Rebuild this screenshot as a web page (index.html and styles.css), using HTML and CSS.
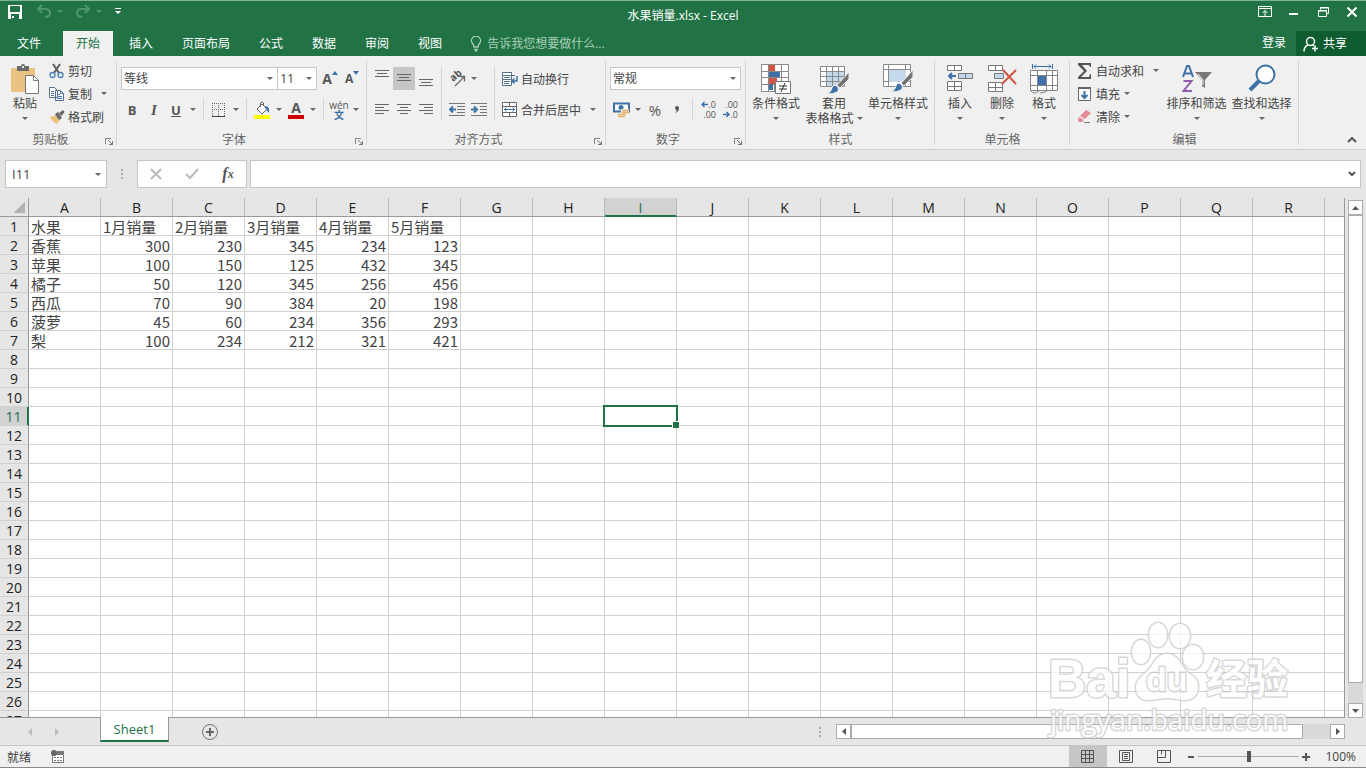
FILE: index.html
```html
<!DOCTYPE html>
<html lang="zh-CN">

<head>
  <meta charset="UTF-8">
  <meta name="viewport" content="width=device-width, initial-scale=1">
  <title>水果销量.xlsx - Excel</title>
  <link rel="stylesheet" href="styles.css">
</head>

<body>
<header class="top">
  <div class="titlebar">
    <div class="quick">
      <button type="button" class="quick-btn" aria-label="保存">
        <svg width="16" height="16" viewBox="0 0 16 16" shape-rendering="crispEdges"><path d="M1 1h14v14H1z" fill="#fff"/><path d="M3 2h10v6H3zM4 10h8v5H4z" fill="#217346"/><path d="M5 12h2v2H5z" fill="#fff"/></svg>
      </button>
      <button type="button" class="quick-btn undo" aria-label="撤消">
        <svg width="16" height="16" viewBox="0 0 16 16"><path d="M6 1L2 5l4 4M2 5h7q5 0 5 4t-5 4" fill="none" stroke="#4f9570" stroke-width="2"/></svg>
      </button>
      <i class="caret dim"></i>
      <button type="button" class="quick-btn redo" aria-label="恢复">
        <svg width="16" height="16" viewBox="0 0 16 16"><path d="M10 1l4 4-4 4M14 5H7q-5 0-5 4t5 4" fill="none" stroke="#4f9570" stroke-width="2"/></svg>
      </button>
      <i class="caret dim"></i>
      <button type="button" class="quick-btn custom" aria-label="自定义快速访问工具栏">
        <svg width="8" height="8" viewBox="0 0 8 8"><path d="M1 0h6v1H1zM1 3h6L4 6z" fill="#fff"/></svg>
      </button>
    </div>
    <h1>水果销量.xlsx - Excel</h1>
    <div class="window-btns">
      <button type="button" aria-label="功能区显示选项"><svg width="14" height="12" viewBox="0 0 14 12"><path d="M.5.5h13v10H.5zM1 2.500h12M7 10V4.500M4.500 7L7 4.500 9.500 7" fill="none" stroke="#fff"/></svg></button>
      <button type="button" aria-label="最小化"><svg width="14" height="12" viewBox="0 0 14 12"><path d="M2 7h9v2H2z" fill="#fff"/></svg></button>
      <button type="button" aria-label="向下还原"><svg width="14" height="12" viewBox="0 0 14 12"><path d="M4.500 3.500v-2h8v6h-2M2.500 4.500h8v6h-8zM4 2h9M2 5h9" fill="none" stroke="#fff"/></svg></button>
      <button type="button" aria-label="关闭"><svg width="14" height="12" viewBox="0 0 14 12"><path d="M2.500 1.500l9 9M11.500 1.500l-9 9" fill="none" stroke="#fff" stroke-width="2"/></svg></button>
    </div>
  </div>
  <nav class="tabs">
    <button type="button" class="file">文件</button>
    <button type="button" class="active">开始</button>
    <button type="button">插入</button>
    <button type="button">页面布局</button>
    <button type="button">公式</button>
    <button type="button">数据</button>
    <button type="button">审阅</button>
    <button type="button">视图</button>
    <label class="tell-me">
      <svg width="12" height="16" viewBox="0 0 12 16"><path d="M4 11q0-2-1.500-3.500a4.500 4.500 0 1 1 7 0Q8 9 8 11zM4 13.500h4M5 15.200h2" fill="none" stroke="#a9d0b9" stroke-width="1.300"/></svg>
      <input type="text" placeholder="告诉我您想要做什么..." aria-label="告诉我您想要做什么">
    </label>
    <a href="#" class="login">登录</a>
    <button type="button" class="share">
      <svg width="16" height="16" viewBox="0 0 16 16"><circle cx="7.500" cy="5.500" r="4" fill="none" stroke="#fff" stroke-width="1.500"/><path d="M1 15.500q0-5 4-6.500M9.500 9l1.500 1M12 9.500v6M9 12.500h6" fill="none" stroke="#fff" stroke-width="1.500"/></svg>
      共享
    </button>
  </nav>
</header>

<div class="ribbon">
  <!-- 剪贴板 -->
  <section class="group clipboard">
    <div class="group-body">
      <button type="button" class="big w42">
        <svg width="30" height="30" viewBox="0 0 30 30"><path d="M1 4h24v24H1z" fill="#eac282"/><path d="M7 2h4q0-2 2-2t2 2h4v5H7z" fill="#6b6b6b"/><path d="M12 2h2v2h-2z" fill="#eee"/><path d="M15.500 11.500h8l5 5v13h-13z" fill="#fff" stroke="#777"/><path d="M23.500 11.500v5h5" fill="none" stroke="#777"/></svg>
        <span>粘贴</span>
        <i class="caret"></i>
      </button>
      <div class="stack">
        <button type="button" class="small">
          <svg width="16" height="16" viewBox="0 0 16 16"><path d="M4 1l6 9M11 1L5 10" stroke="#5c5c5c" stroke-width="2"/><circle cx="3.500" cy="12" r="2.500" fill="none" stroke="#4a7ebb" stroke-width="1.300"/><circle cx="11.500" cy="12" r="2.500" fill="none" stroke="#4a7ebb" stroke-width="1.300"/></svg>
          剪切
        </button>
        <button type="button" class="small">
          <svg width="16" height="16" viewBox="0 0 16 16"><path d="M.5 1.500h5l3 3v7h-8zM6.500 4.500h5l3 3v7h-8z" fill="#fff" stroke="#56708c"/><path d="M2 5.500h3M2 7.500h3M2 9.500h3M8 8.500h3M8 10.500h5M8 12.500h5M11.500 4.500v3h3" stroke="#4a7ebb" fill="none"/></svg>
          复制<i class="caret far"></i>
        </button>
        <button type="button" class="small">
          <svg width="16" height="16" viewBox="0 0 16 16"><path d="M1 8l6-2 4 5-3 4q-5-2-7-7z" fill="#eac282"/><path d="M6 5l3-2 4 6-3 2z" fill="#666"/><path d="M10 4l4-3 1.500 2-3 4z" fill="#666"/></svg>
          格式刷
        </button>
      </div>
    </div>
    <footer><span>剪贴板</span><button type="button" class="launcher" aria-label="剪贴板设置"></button></footer>
  </section>

  <!-- 字体 -->
  <section class="group font">
    <div class="group-body rows">
      <div class="row">
        <span class="combo font-name"><select aria-label="字体"><option>等线</option></select></span>
        <span class="combo font-size"><select aria-label="字号"><option>11</option></select></span>
        <button type="button" class="tool grow" aria-label="增大字号"><b>A</b><svg width="6" height="4" viewBox="0 0 6 4"><path d="M0 4l3-4 3 4z" fill="#3d72a8"/></svg></button>
        <button type="button" class="tool grow shrink" aria-label="减小字号"><b>A</b><svg width="6" height="4" viewBox="0 0 6 4"><path d="M0 0l3 4 3-4z" fill="#3d72a8"/></svg></button>
      </div>
      <div class="row">
        <button type="button" class="tool"><b>B</b></button>
        <button type="button" class="tool italic"><b>I</b></button>
        <button type="button" class="tool underline"><b>U</b></button>
        <button type="button" class="drop" aria-label="下划线选项"><i class="caret"></i></button>
        <i class="sep"></i>
        <button type="button" class="tool" aria-label="边框"><svg width="14" height="14" viewBox="0 0 14 14"><path d="M.5 0v13M6.500 0v13M12.500 0v13M0 .5h13M0 6.500h13" stroke="#666" stroke-dasharray="1 1"/><path d="M0 13.500h13" stroke="#444"/></svg></button>
        <button type="button" class="drop" aria-label="边框选项"><i class="caret"></i></button>
        <i class="sep"></i>
        <button type="button" class="tool" aria-label="填充颜色"><svg width="16" height="18" viewBox="0 0 16 18"><path d="M3 8l5-5 5 5-5 5z" fill="#fff" stroke="#666"/><path d="M6.500 6V2q1.500-2 3 0v3" fill="none" stroke="#666"/><path d="M11 5q5 0 4 7-2-3-3-3z" fill="#3d72a8"/><path d="M0 14h16v4H0z" fill="#ff0"/></svg></button>
        <button type="button" class="drop" aria-label="填充颜色选项"><i class="caret"></i></button>
        <button type="button" class="tool font-color" aria-label="字体颜色"><b>A</b></button>
        <button type="button" class="drop" aria-label="字体颜色选项"><i class="caret"></i></button>
        <i class="sep"></i>
        <button type="button" class="tool pinyin"><span>wén</span><span>文</span></button>
        <button type="button" class="drop" aria-label="拼音选项"><i class="caret"></i></button>
      </div>
    </div>
    <footer><span>字体</span><button type="button" class="launcher" aria-label="字体设置"></button></footer>
  </section>

  <!-- 对齐方式 -->
  <section class="group align">
    <div class="group-body">
      <div class="rows">
        <div class="row">
          <button type="button" class="tool" aria-label="顶端对齐"><svg width="14" height="23" viewBox="0 0 14 23"><path d="M0 3.500h14M2 6.500h10M0 9.500h14" stroke="#666"/></svg></button>
          <button type="button" class="tool on" aria-label="垂直居中"><svg width="14" height="23" viewBox="0 0 14 23"><path d="M0 7.500h14M2 10.500h10M0 13.500h14" stroke="#666"/></svg></button>
          <button type="button" class="tool" aria-label="底端对齐"><svg width="14" height="23" viewBox="0 0 14 23"><path d="M0 12.500h14M2 15.500h10M0 18.500h14" stroke="#666"/></svg></button>
        </div>
        <div class="row">
          <button type="button" class="tool" aria-label="左对齐"><svg width="14" height="15" viewBox="0 0 14 15"><path d="M0 2.500h14M0 5.500h9M0 8.500h14M0 11.500h9" stroke="#666"/></svg></button>
          <button type="button" class="tool" aria-label="居中"><svg width="14" height="15" viewBox="0 0 14 15"><path d="M0 2.500h14M3 5.500h8M0 8.500h14M3 11.500h8" stroke="#666"/></svg></button>
          <button type="button" class="tool" aria-label="右对齐"><svg width="14" height="15" viewBox="0 0 14 15"><path d="M0 2.500h14M5 5.500h9M0 8.500h14M5 11.500h9" stroke="#666"/></svg></button>
        </div>
      </div>
      <i class="sep tall"></i>
      <div class="rows">
        <div class="row">
          <button type="button" class="tool" aria-label="方向"><svg width="20" height="19" viewBox="0 0 20 19"><text font-size="10" font-weight="bold" fill="#555" transform="translate(6 13) rotate(-40)">ab</text><path d="M8 17l9-9M12.500 7.500h5v5" fill="none" stroke="#666" stroke-width="1.300"/></svg></button>
          <button type="button" class="drop" aria-label="方向选项"><i class="caret"></i></button>
        </div>
        <div class="row">
          <button type="button" class="tool" aria-label="减少缩进量"><svg width="16" height="15" viewBox="0 0 16 15"><path d="M0 1.500h16M8 4.500h8M8 7.500h8M8 10.500h8M0 13.500h16" stroke="#777"/><path d="M7 7.500H1M4 4.500l-3 3 3 3" fill="none" stroke="#3d72a8" stroke-width="2"/></svg></button>
          <button type="button" class="tool" aria-label="增加缩进量"><svg width="16" height="15" viewBox="0 0 16 15"><path d="M0 1.500h16M9 4.500h7M9 7.500h7M9 10.500h7M0 13.500h16" stroke="#777"/><path d="M0 7.500h6M3 4.500l3 3-3 3" fill="none" stroke="#3d72a8" stroke-width="2"/></svg></button>
        </div>
      </div>
      <i class="sep tall"></i>
      <div class="rows">
        <div class="row">
          <button type="button" class="small">
            <svg width="16" height="16" viewBox="0 0 16 16"><path d="M.5 1.500h9v3h-9zM.5 4.500h9v4h-9zM.5 8.500h9v6h-9z" fill="#fff" stroke="#56708c"/><path d="M2 6.500h6M2 10.500h6M2 12.500h5M0 1.500h10M10 4.500h3" stroke="#56708c"/><path d="M15 5v5h-5M12.500 7.500L10 10l2.500 2.500" fill="none" stroke="#3d72a8" stroke-width="1.500"/></svg>
            自动换行
          </button>
        </div>
        <div class="row">
          <button type="button" class="small">
            <svg width="16" height="16" viewBox="0 0 16 16"><path d="M.5.5h14v14H.5zM.5 4.500h14M.5 10.500h14M7.500.5v4M7.500 10.500v4" fill="#fff" stroke="#666"/><path d="M2 7.500h11M4.500 5.500l-2 2 2 2M10.500 5.500l2 2-2 2" fill="none" stroke="#3d72a8"/></svg>
            合并后居中<i class="caret far"></i>
          </button>
        </div>
      </div>
    </div>
    <footer><span>对齐方式</span><button type="button" class="launcher" aria-label="对齐设置"></button></footer>
  </section>

  <!-- 数字 -->
  <section class="group number">
    <div class="group-body rows">
      <div class="row">
        <span class="combo format"><select aria-label="数字格式"><option>常规</option></select></span>
      </div>
      <div class="row">
        <button type="button" class="tool" aria-label="会计数字格式"><svg width="17" height="16" viewBox="0 0 17 16"><path d="M1 1.500h15v8H1z" fill="#fff" stroke="#3d72a8" stroke-width="2"/><circle cx="8" cy="5.500" r="2.500" fill="#3d72a8"/><path d="M8 7h8v8H5v-3h3z" fill="#f0f0f0"/><path d="M9 8.500h7M9 10.500h7M5 12.500h8M5 14.500h7" stroke="#e6b066" stroke-width="1.500"/></svg></button>
        <button type="button" class="drop" aria-label="会计格式选项"><i class="caret"></i></button>
        <button type="button" class="tool percent">%</button>
        <button type="button" class="tool comma" aria-label="千位分隔样式"><svg width="8" height="10" viewBox="0 0 8 10"><path d="M2 8q2-1.500 1.500-3A2 2 0 1 1 6 3Q6 6.500 2 8z" fill="#555"/></svg></button>
        <i class="sep"></i>
        <button type="button" class="tool decimals"><span><svg width="7" height="7" viewBox="0 0 7 7"><path d="M7 3.500H1M3.500 1L1 3.500 3.500 6" fill="none" stroke="#3d72a8" stroke-width="1.500"/></svg>.0</span><span>.00</span></button>
        <button type="button" class="tool decimals"><span>.00</span><span><svg width="7" height="7" viewBox="0 0 7 7"><path d="M0 3.500h6M3.500 1L6 3.500 3.500 6" fill="none" stroke="#3d72a8" stroke-width="1.500"/></svg>.0</span></button>
      </div>
    </div>
    <footer><span>数字</span><button type="button" class="launcher" aria-label="数字设置"></button></footer>
  </section>

  <!-- 样式 -->
  <section class="group styles">
    <div class="group-body">
      <button type="button" class="big w52">
        <svg width="30" height="30" viewBox="0 0 30 30"><path d="M.5.500h27v27H.5z" fill="#fff"/><path d="M.5.500h27v27H.5zM.5 7.500h27M.5 13.500h27M.5 20.500h27M7.500.500v27M13.500.500v27M20.500.500v27" fill="none" stroke="#8a8a8a"/><path d="M8 1h6v6H8zM8 14h8v6H8z" fill="#d35644"/><path d="M8 8h11v5H8zM8 20h4v6H8z" fill="#3d72a8"/><path d="M14.500 17.500h15v12h-15z" fill="#fff" stroke="#777"/><path d="M18 22h8M18 25h8M24 19l-4 9" stroke="#333"/></svg>
        <span>条件格式</span>
        <i class="caret"></i>
      </button>
      <button type="button" class="big w64">
        <svg width="30" height="30" viewBox="0 0 30 30"><path d="M1.500 2.500h24v20h-24z" fill="#fff"/><path d="M8 8h17v14H8z" fill="#c5d9ec"/><path d="M1.500 2.500h24v20h-24zM1.500 7.500h24M1.500 12.500h24M1.500 17.500h24M7.500 2.500v20M13.500 2.500v20M19.500 2.500v20" fill="none" stroke="#8a8a8a"/><path d="M30 8v7l-9 9-3-3z" fill="#747474" stroke="#f0f0f0"/><path d="M7 30q5-1 6-6t6-1q3 7-12 7z" fill="#3d72a8" stroke="#f0f0f0"/></svg>
        <span>套用</span>
        <span class="with-caret">表格格式<i class="caret"></i></span>
      </button>
      <button type="button" class="big w64">
        <svg width="30" height="30" viewBox="0 0 30 30"><path d="M.5.500h27v22H.5z" fill="#fff"/><path d="M.5.500h27v22H.5zM.5 5.500h27M.5 17.500h27M5.500.500v22M22.500.500v22" fill="none" stroke="#8a8a8a"/><path d="M6 6h17v12H6z" fill="#c5d9ec"/><path d="M30 6v7l-9 9-3-3z" fill="#747474" stroke="#f0f0f0"/><path d="M7 28q5-1 6-6t6-1q3 7-12 7z" fill="#3d72a8" stroke="#f0f0f0"/></svg>
        <span>单元格样式</span>
        <i class="caret"></i>
      </button>
    </div>
    <footer><span>样式</span></footer>
  </section>

  <!-- 单元格 -->
  <section class="group cells">
    <div class="group-body">
      <button type="button" class="big w42">
        <svg width="28" height="30" viewBox="0 0 28 30"><path d="M1.500 1.500h14v5h-14zM8.500 1.500v5M1.500 17.500h14v9h-14zM8.500 17.500v9M1.500 22.500h14" fill="#fff" stroke="#777"/><path d="M12.500 9.500h14v5h-14zM19.500 9.500v5" fill="#c5d9ec" stroke="#777"/><path d="M10 12H3M6 9l-3 3 3 3" fill="none" stroke="#3d72a8" stroke-width="2"/></svg>
        <span>插入</span>
        <i class="caret"></i>
      </button>
      <button type="button" class="big w42">
        <svg width="30" height="30" viewBox="0 0 30 30"><path d="M1.500 1.500h14v5h-14zM8.500 1.500v5M1.500 18.500h14v9h-14zM8.500 18.500v9M1.500 23.500h14" fill="#fff" stroke="#777"/><path d="M7.500 9.500h9v5h-9z" fill="#c5d9ec" stroke="#777"/><path d="M16 6l13 14M29 6L15 20" stroke="#d35644" stroke-width="2"/></svg>
        <span>删除</span>
        <i class="caret"></i>
      </button>
      <button type="button" class="big w42">
        <svg width="28" height="30" viewBox="0 0 28 30"><path d="M.5 6.500h27v20H.5z" fill="#fff"/><path d="M.5 6.500h27v20H.5zM.5 11.500h27M.5 21.500h27M7.500 6.500v20M16.500 6.500v20M22.500 6.500v20M1 27q3 4 8 0M10 29q5 0 8-3" fill="none" stroke="#858585"/><path d="M8 12h8v9H8z" fill="#3d72a8"/><path d="M2.500 0v5M22.500 0v5M4 2.500h17M6 .5l-2 2 2 2M19 .5l2 2-2 2" fill="none" stroke="#3d72a8"/></svg>
        <span>格式</span>
        <i class="caret"></i>
      </button>
    </div>
    <footer><span>单元格</span></footer>
  </section>

  <!-- 编辑 -->
  <section class="group edit">
    <div class="group-body">
      <div class="stack">
        <button type="button" class="small">
          <svg width="16" height="16" viewBox="0 0 16 16"><path d="M1 0h13v4h-1L12 2H5l5 6-6 6h8l1-3h1v5H1v-2l6-6-6-6z" fill="#555"/></svg>
          自动求和<i class="caret far"></i>
        </button>
        <button type="button" class="small">
          <svg width="16" height="16" viewBox="0 0 16 16"><path d="M1.500 1.500h12v13h-12z" fill="#fff" stroke="#666"/><path d="M1 1h13v2H1z" fill="#666"/><path d="M7.500 5v7M4.500 9l3 3 3-3" fill="none" stroke="#3d72a8" stroke-width="2"/></svg>
          填充<i class="caret near"></i>
        </button>
        <button type="button" class="small">
          <svg width="16" height="16" viewBox="0 0 16 16"><path d="M9 1l5 3-6 6-5-3z" fill="#e58a93"/><path d="M2 8l5 3-2 2H2l-1-2z" fill="#e58a93"/><path d="M7 13.500h6" stroke="#777"/></svg>
          清除<i class="caret near"></i>
        </button>
      </div>
      <button type="button" class="big w65">
        <svg width="30" height="30" viewBox="0 0 30 30"><path d="M1 13L5 2h2l4 11M2.500 9.500h7" fill="none" stroke="#3d72a8" stroke-width="2"/><path d="M1.500 17h8l-8 10H10" fill="none" stroke="#8d5fae" stroke-width="2"/><path d="M13 8h17l-7 8v8l-3-2v-6z" fill="#777"/><path d="M16 10l5 6v5" fill="none" stroke="#fff"/></svg>
        <span>排序和筛选</span>
        <i class="caret"></i>
      </button>
      <button type="button" class="big w65">
        <svg width="30" height="30" viewBox="0 0 30 30"><circle cx="18.500" cy="10.500" r="9" fill="#fff" stroke="#3d72a8" stroke-width="2"/><path d="M12 17l-9 9" stroke="#3d72a8" stroke-width="4"/></svg>
        <span>查找和选择</span>
        <i class="caret"></i>
      </button>
    </div>
    <footer><span>编辑</span></footer>
  </section>

  <button type="button" class="collapse" aria-label="折叠功能区"><svg width="10" height="6" viewBox="0 0 10 6"><path d="M1 5l4-4 4 4" fill="none" stroke="#555" stroke-width="2"/></svg></button>
</div>

<div class="formula-bar">
  <label class="name-box">
    <input type="text" value="I11" aria-label="名称框">
    <i class="caret"></i>
  </label>
  <i class="dots"></i>
  <div class="formula-btns">
    <button type="button" aria-label="取消"><svg width="12" height="12" viewBox="0 0 12 12"><path d="M1 1l10 10M11 1L1 11" stroke="#bbb" stroke-width="2"/></svg></button>
    <button type="button" aria-label="输入"><svg width="14" height="12" viewBox="0 0 14 12"><path d="M1 6l4 4 8-9" fill="none" stroke="#bbb" stroke-width="2"/></svg></button>
    <button type="button" class="fx"><i>f</i><sub>x</sub></button>
  </div>
  <label class="formula">
    <input type="text" aria-label="编辑栏">
    <svg width="8" height="6" viewBox="0 0 8 6"><path d="M1 1l3 3 3-3" fill="none" stroke="#555" stroke-width="2"/></svg>
  </label>
</div>

<main class="sheet-area">
  <div class="sheet">
    <table id="grid"></table>
  </div>
  <div class="vscroll">
    <button type="button" aria-label="向上滚动"><svg width="7" height="4" viewBox="0 0 7 4"><path d="M0 4l3.500-4L7 4z" fill="#555"/></svg></button>
    <div class="vtrack"><div class="vthumb"></div></div>
    <button type="button" aria-label="向下滚动"><svg width="7" height="4" viewBox="0 0 7 4"><path d="M0 0l3.500 4L7 0z" fill="#555"/></svg></button>
  </div>
</main>

<div class="sheet-tabs">
  <div class="sheet-nav">
    <button type="button" aria-label="上一张"><svg width="5" height="8" viewBox="0 0 5 8"><path d="M5 0v8L1 4z" fill="#bbb"/></svg></button>
    <button type="button" aria-label="下一张"><svg width="5" height="8" viewBox="0 0 5 8"><path d="M0 0v8l4-4z" fill="#bbb"/></svg></button>
  </div>
  <button type="button" class="sheet-tab">Sheet1</button>
  <button type="button" class="add-sheet" aria-label="新工作表"><svg width="18" height="18" viewBox="0 0 18 18"><circle cx="9" cy="9" r="7.500" fill="none" stroke="#777"/><path d="M9 5v8M5 9h8" stroke="#666" stroke-width="2"/></svg></button>
  <div class="hscroll">
    <i class="dots"></i>
    <button type="button" aria-label="向左滚动"><svg width="4" height="7" viewBox="0 0 4 7"><path d="M4 0v7L0 3.500z" fill="#555"/></svg></button>
    <div class="htrack"><div class="hthumb"></div></div>
    <button type="button" aria-label="向右滚动"><svg width="4" height="7" viewBox="0 0 4 7"><path d="M0 0v7l4-3.500z" fill="#555"/></svg></button>
  </div>
</div>

<footer class="status">
  <span>就绪</span>
  <button type="button" class="macro" aria-label="录制宏"><svg width="14" height="14" viewBox="0 0 14 14"><path d="M1.500 4.500h11v8h-11z" fill="#fff" stroke="#777"/><path d="M6 1h7v3H6z" fill="#777"/><circle cx="3" cy="3" r="3" fill="#666"/><path d="M3 7.500h2M6 7.500h2M9 7.500h2M3 10.500h2M6 10.500h2M9 10.500h2" stroke="#777"/></svg></button>
  <div class="views">
    <button type="button" class="on" aria-label="普通"><svg width="14" height="14" viewBox="0 0 14 14"><path d="M.5.500h12v12H.5zM.5 4.500h12M.5 8.500h12M4.500.500v12M8.500.500v12" fill="none" stroke="#555"/></svg></button>
    <button type="button" aria-label="页面布局视图"><svg width="14" height="14" viewBox="0 0 14 14"><path d="M.5.500h13v12H.5zM3.500 2.500h7v8h-7zM5 4.500h4M5 6.500h4M5 8.500h4" fill="none" stroke="#555"/></svg></button>
    <button type="button" aria-label="分页预览"><svg width="14" height="14" viewBox="0 0 14 14"><path d="M.5.500h13v12H.5zM.5 7.500h8v-7M4.500.500v4" fill="none" stroke="#555"/></svg></button>
  </div>
  <div class="zoom">
    <button type="button" aria-label="缩小"><svg width="8" height="8" viewBox="0 0 8 8"><path d="M1 3h6v2H1z" fill="#555"/></svg></button>
    <input type="range" min="0" max="100" value="50" aria-label="缩放">
    <button type="button" aria-label="放大"><svg width="8" height="8" viewBox="0 0 8 8"><path d="M3 0h2v3h3v2H5v3H3V5H0V3h3z" fill="#555"/></svg></button>
    <button type="button" class="zoom-value">100%</button>
  </div>
</footer>

<svg class="watermark" width="250" height="124" viewBox="0 0 250 124">
  <g class="wm-shape">
    <ellipse cx="94" cy="34" rx="9" ry="12"/>
    <ellipse cx="111" cy="17" rx="9" ry="12"/>
    <ellipse cx="133" cy="18" rx="10" ry="12"/>
    <ellipse cx="146" cy="39" rx="10" ry="12"/>
    <path d="M120 36C128 36 132 42 136 49C141 57 151 58 151 68C151 77 146 82 138 82C132 82 127 80 120 80C113 80 108 82 101 82C93 82 89 77 89 69C89 60 98 57 104 49C108 42 112 36 120 36z"/>
  </g>
  <text class="wm-latin" x="1" y="79" font-size="53">Bai</text>
  <text class="wm-latin" x="99" y="73" font-size="34">du</text>
  <text class="wm-cjk" x="159" y="76" font-size="41">经验</text>
  <text class="wm-url" x="3" y="112" font-size="28">jingyan.baidu.com</text>
</svg>

<script src="script.js"></script>
</body>

</html>
```
FILE: styles.css
```css
* {
    box-sizing: border-box;
}

body {
    margin: 0;
    height: 100vh;
    display: flex;
    flex-direction: column;
    overflow: hidden;
    position: relative;
    background: #e6e6e6;
    color: #444;
    font-family: "Open Sans", "Noto Sans CJK SC", sans-serif;
    font-size: 12px;
}

button,
input,
select {
    margin: 0;
    padding: 0;
    border: 0;
    background: none;
    color: inherit;
    font: inherit;
    outline: none;
}

svg {
    display: block;
    flex: none;
}

.caret {
    flex: none;
    border: 3px solid transparent;
    border-top-color: #666;
    border-bottom: 0;
}

.caret.dim {
    border-top-color: #4f9570;
}

/* 标题栏 */
.top {
    background: #217346;
    border-top: 1px solid #7db596;
    color: #fff;
}

.titlebar {
    display: grid;
    grid-template-columns: 1fr auto 1fr;
    height: 30px;
}

.titlebar h1 {
    margin: 0;
    font-size: 12px;
    font-weight: normal;
    line-height: 29px;
}

.quick {
    display: flex;
    align-items: center;
    height: 21px;
    padding-left: 7px;
}

.undo {
    margin-left: 13px;
    margin-right: 5px;
}

.redo {
    margin-left: 12px;
    margin-right: 5px;
}

.custom {
    margin-left: 12px;
}

.window-btns {
    display: flex;
    justify-content: flex-end;
    height: 22px;
}

.window-btns button {
    width: 29px;
    display: flex;
    align-items: center;
    justify-content: center;
}

/* 选项卡 */
.tabs {
    display: flex;
    gap: 3px;
    height: 25px;
}

.tabs button {
    padding: 0 13px;
    line-height: 23px;
}

.tabs .file {
    padding: 0 19px 0 17px;
}

.tabs .active {
    background: #f0f0f0;
    color: #217346;
}

.tell-me {
    display: flex;
    align-items: center;
    gap: 5px;
    flex: 1;
    margin-left: 12px;
}

.tell-me input {
    flex: 1;
}

.tell-me input::placeholder {
    color: #a9d0b9;
    opacity: 1;
}

.login {
    color: #fff;
    text-decoration: none;
    line-height: 23px;
    margin-right: 7px;
}

.tabs .share {
    display: flex;
    align-items: center;
    gap: 4px;
    padding: 0 19px 0 7px;
    background: #0e5c2f;
}

/* 功能区 */
.ribbon {
    display: flex;
    height: 94px;
    padding-top: 3px;
    background: #f0f0f0;
    border-bottom: 1px solid #d0d0d0;
}

.group {
    display: flex;
    flex-direction: column;
    flex: none;
    background: linear-gradient(#d4d4d4, #d4d4d4) right 2px / 1px 84px no-repeat;
}

.clipboard {
    width: 117px;
}

.font {
    width: 250px;
}

.align {
    width: 239px;
}

.number {
    width: 140px;
}

.styles {
    width: 189px;
}

.cells {
    width: 135px;
}

.edit {
    width: 229px;
}

.group-body {
    display: flex;
    height: 73px;
    padding: 0 4px;
}

.rows {
    display: flex;
    flex-direction: column;
    gap: 8px;
    padding-top: 8px;
}

.row {
    display: flex;
    height: 23px;
}

.stack {
    display: flex;
    flex-direction: column;
}

.edit .stack {
    width: 90px;
}

.group footer {
    display: flex;
    height: 16px;
    line-height: 16px;
    color: #666;
}

.group footer span {
    flex: 1;
    text-align: center;
}

.launcher {
    width: 16px;
    background:
        linear-gradient(#888, #888) 4px 6px / 6px 1px no-repeat,
        linear-gradient(#888, #888) 4px 6px / 1px 6px no-repeat,
        linear-gradient(#777, #777) 8px 12px / 4px 1px no-repeat,
        linear-gradient(#777, #777) 11px 9px / 1px 4px no-repeat,
        linear-gradient(45deg, transparent 40%, #777 40%, #777 60%, transparent 60%) 7px 8px / 4px 4px no-repeat;
}

.big {
    display: flex;
    flex-direction: column;
    align-items: center;
    padding-top: 5px;
    line-height: 15px;
    white-space: nowrap;
}

.big svg {
    margin-bottom: 2px;
}

.big > .caret {
    margin-top: 6px;
}

.with-caret {
    display: flex;
    align-items: center;
    gap: 3px;
}

.w42 {
    width: 42px;
}

.w52 {
    width: 52px;
}

.w64 {
    width: 64px;
}

.w65 {
    width: 65px;
}

.small {
    display: flex;
    align-items: center;
    gap: 3px;
    height: 23px;
    padding-left: 3px;
    white-space: nowrap;
}

.small .far {
    margin-left: 6px;
}

.small .near {
    margin-left: 1px;
}

.tool {
    display: flex;
    align-items: center;
    justify-content: center;
    width: 22px;
    height: 23px;
    color: #555;
    font-size: 13px;
    line-height: 22px;
}

.tool.on {
    background: #c6c6c6;
}

.italic {
    font-family: "Liberation Serif", serif;
    font-style: italic;
    font-size: 15px;
}

.underline {
    text-decoration: underline;
}

.drop {
    display: flex;
    align-items: center;
    justify-content: center;
    width: 12px;
}

.sep {
    width: 1px;
    height: 23px;
    margin: 0 4px;
    background: #d4d4d4;
}

.sep.tall {
    height: 54px;
    margin-top: 8px;
}

.combo {
    display: flex;
    position: relative;
    height: 23px;
    background: #fff;
    border: 1px solid #c6c6c6;
}

.combo::after {
    content: "";
    position: absolute;
    right: 4px;
    top: 9px;
    border: 3px solid transparent;
    border-top-color: #666;
    border-bottom: 0;
}

.combo select {
    flex: 1;
    appearance: none;
    padding-left: 2px;
}

.font-name {
    width: 158px;
}

.font-size {
    width: 40px;
    margin-left: -1px;
    margin-right: 2px;
}

.format {
    width: 131px;
}

.grow {
    font-size: 14px;
}

.grow svg {
    margin-bottom: 12px;
}

.shrink {
    font-size: 12px;
}

.font-color b {
    width: 16px;
    font-size: 14px;
    line-height: 14px;
    border-bottom: 4px solid #c00;
}

.pinyin {
    flex-direction: column;
    font-size: 10px;
    line-height: 10px;
}

.pinyin span + span {
    color: #3d72a8;
    font-weight: bold;
}

.percent {
    font-size: 15px;
}

.decimals {
    flex-direction: column;
    align-items: flex-end;
    padding-right: 3px;
    font-size: 9px;
    line-height: 10px;
}

.decimals span {
    display: flex;
    align-items: center;
}

.collapse {
    margin-left: auto;
    margin-right: 9px;
    align-self: flex-end;
    height: 18px;
}

/* 编辑栏 */
.formula-bar {
    display: flex;
    height: 48px;
    padding: 10px 5px;
}

.name-box,
.formula,
.formula-btns {
    display: flex;
    align-items: center;
    background: #fff;
    border: 1px solid #c6c6c6;
}

.name-box {
    width: 102px;
    padding: 0 5px 0 6px;
}

.name-box input {
    flex: 1;
    min-width: 0;
    font-size: 13px;
}

.dots {
    width: 2px;
    height: 10px;
    background: repeating-linear-gradient(#aaa 0 2px, transparent 2px 4px);
}

.formula-bar .dots {
    margin: 9px 14px;
}

.formula-btns {
    width: 110px;
    margin-right: 3px;
}

.formula-btns button {
    display: flex;
    align-items: center;
    justify-content: center;
    width: 36px;
    height: 26px;
}

.fx {
    font-family: "Liberation Serif", serif;
    font-size: 16px;
    font-weight: bold;
    color: #555;
}

.fx sub {
    font-size: 12px;
    font-style: italic;
}

.formula {
    flex: 1;
    padding: 0 4px;
}

.formula input {
    flex: 1;
}

/* 工作表 */
.sheet-area {
    display: flex;
    flex: 1;
    min-height: 0;
}

.sheet {
    flex: 1;
    overflow: hidden;
    border-right: 1px solid #999;
    border-bottom: 1px solid #999;
}

table {
    table-layout: fixed;
    width: 1397px;
    border-collapse: separate;
    border-spacing: 0;
}

th,
td {
    width: 72px;
    height: 19px;
    padding: 2px 2px 0;
    border-right: 1px solid #d0d0d0;
    border-bottom: 1px solid #d0d0d0;
    line-height: 16px;
    white-space: nowrap;
}

th {
    background: #e6e6e6;
    color: #222;
    font-size: 14px;
    font-weight: normal;
}

thead th {
    border-right-color: #b8b8b8;
    border-bottom-color: #999;
}

th:first-child {
    width: 29px;
    border-right-color: #999;
}

.corner {
    background: linear-gradient(135deg, transparent 50%, #b4b4b4 50%) 14px 4px / 11px 11px no-repeat #e6e6e6;
}

td {
    background: #fff;
    font-family: "Noto Sans CJK SC", sans-serif;
    font-size: 15px;
}

td.num {
    text-align: right;
}

thead th.current {
    background: #d2d2d2;
    color: #217346;
    border-bottom: 2px solid #217346;
    line-height: 15px;
}

tbody th.current {
    background: #d2d2d2;
    color: #217346;
    border-right: 2px solid #217346;
}

td.selected {
    position: relative;
}

td.selected::before {
    content: "";
    position: absolute;
    inset: -2px;
    border: 2px solid #217346;
}

td.selected::after {
    content: "";
    position: absolute;
    right: -3px;
    bottom: -3px;
    width: 6px;
    height: 6px;
    background: #217346;
    border: 1px solid #fff;
    border-right: 0;
    border-bottom: 0;
}

/* 滚动条 */
.vscroll {
    display: flex;
    flex-direction: column;
    width: 21px;
    padding: 2px 3px 0;
}

.vscroll button,
.hscroll button {
    display: flex;
    align-items: center;
    justify-content: center;
    flex: none;
    width: 15px;
    height: 15px;
    background: #fff;
    border: 1px solid #ababab;
}

.vtrack {
    flex: 1;
    background: #d9d9d9;
}

.vthumb {
    height: 96%;
    background: #fff;
    border: 1px solid #ababab;
}

.sheet-tabs {
    display: flex;
    height: 27px;
}

.sheet-nav {
    display: flex;
    width: 100px;
    padding-left: 15px;
}

.sheet-nav button {
    display: flex;
    align-items: center;
    justify-content: center;
    width: 28px;
}

.sheet-tab {
    height: 25px;
    width: 69px;
    margin-top: -1px;
    z-index: 1;
    background: #fff;
    border: 1px solid #999;
    border-top: 0;
    border-bottom: 2px solid #217346;
    color: #217346;
    font-size: 13px;
}

.add-sheet {
    margin-left: 32px;
}

.hscroll {
    display: flex;
    align-items: center;
    width: 528px;
    margin-left: auto;
    margin-right: 21px;
}

.hscroll .dots {
    margin: 0 15px 0 2px;
}

.htrack {
    flex: 1;
    height: 15px;
    padding-right: 27px;
    background: #d9d9d9;
}

.hthumb {
    height: 15px;
    background: #fff;
    border: 1px solid #ababab;
}

/* 状态栏 */
.status {
    display: flex;
    align-items: center;
    height: 23px;
    padding-left: 7px;
    background: #f0f0f0;
    border-top: 1px solid #c6c6c6;
    border-bottom: 1px solid #888;
}

.macro {
    margin-left: 20px;
}

.views {
    display: flex;
    height: 100%;
    margin-left: auto;
}

.views button {
    display: flex;
    align-items: center;
    justify-content: center;
    width: 38px;
}

.views .on {
    background: #c6c6c6;
}

.zoom {
    display: flex;
    align-items: center;
    gap: 3px;
    margin-left: 4px;
    padding-right: 10px;
}

.zoom input {
    appearance: none;
    width: 101px;
    height: 11px;
    background: linear-gradient(#aaa, #aaa) 0 5px / 100% 1px no-repeat;
}

.zoom input::-webkit-slider-thumb {
    appearance: none;
    width: 4px;
    height: 11px;
    background: #555;
}

.zoom-value {
    margin-left: 12px;
}

/* 水印 */
.watermark {
    position: absolute;
    right: 69px;
    bottom: 26px;
    opacity: 0.75;
    pointer-events: none;
}

.watermark text,
.wm-shape {
    fill: #fff;
    stroke: #ccc;
    stroke-width: 3;
    stroke-linejoin: round;
    paint-order: stroke;
}

.wm-latin {
    font-family: "Liberation Sans", sans-serif;
    font-weight: bold;
}

.wm-cjk {
    font-family: "Noto Sans CJK SC", sans-serif;
    font-weight: bold;
}

.wm-url {
    font-family: "Open Sans", sans-serif;
}
```
FILE: script.js
```js
// the last column is only partly in view, its letter stays out of sight
const columns = [..."ABCDEFGHIJKLMNOPQR", ""];
const rowCount = 27;
const current = {column: "I", row: 11};

const data = [
    ["水果", "1月销量", "2月销量", "3月销量", "4月销量", "5月销量"],
    ["香蕉", 300, 230, 345, 234, 123],
    ["苹果", 100, 150, 125, 432, 345],
    ["橘子", 50, 120, 345, 256, 456],
    ["西瓜", 70, 90, 384, 20, 198],
    ["菠萝", 45, 60, 234, 356, 293],
    ["梨", 100, 234, 212, 321, 421]
];

function headCell(text, isCurrent) {
    return `<th class="${isCurrent ? "current" : ""}">${text}</th>`;
}

function dataCell(row, index) {
    const value = data[row - 1]?.[index] ?? "";
    const classes = [];
    if (typeof value === "number") {
        classes.push("num");
    }
    if (row === current.row && columns[index] === current.column) {
        classes.push("selected");
    }
    return `<td class="${classes.join(" ")}">${value}</td>`;
}

let html = "<thead><tr><th class='corner'></th>";
html += columns.map(c => headCell(c, c === current.column)).join("");
html += "</tr></thead><tbody>";
for (let row = 1; row <= rowCount; row++) {
    html += "<tr>" + headCell(row, row === current.row);
    html += columns.map((c, i) => dataCell(row, i)).join("") + "</tr>";
}
html += "</tbody>";
document.getElementById("grid").innerHTML = html;
```
